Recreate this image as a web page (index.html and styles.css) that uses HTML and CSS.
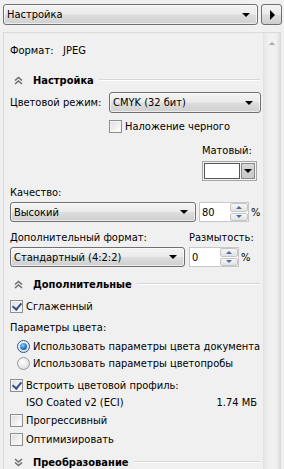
FILE: index.html
```html
<!DOCTYPE html>
<html lang="ru">
<head>
<meta charset="utf-8">
<title>Настройка</title>
<link rel="stylesheet" href="styles.css">
</head>
<body>
<div class="topbar">
  <div class="combo combo-top"><span class="combo-text">Настройка</span><span class="arrow"></span></div>
  <div class="play-btn"><span class="play"></span></div>
</div>
<div class="panel">
  <div class="content">
    <div class="row row-format"><span class="fmt-label">Формат:</span><span class="fmt-value">JPEG</span></div>

    <div class="section sec-1">
      <svg class="chev" width="9" height="9" viewBox="0 0 9 9"><path d="M1 4.5 L4.5 1.5 L8 4.5 M1 8 L4.5 5 L8 8" fill="none" stroke="#6d6d6d" stroke-width="1.6"/></svg>
      <span class="sec-title">Настройка</span><span class="sec-line"></span>
    </div>

    <div class="row row-mode">
      <span class="mode-label">Цветовой режим:</span>
      <div class="combo combo-mode"><span class="combo-text">CMYK (32 бит)</span><span class="arrow"></span></div>
    </div>

    <label class="row check-row row-overprint"><span class="cb"></span>Наложение черного</label>

    <div class="matte">
      <div class="matte-label">Матовый:</div>
      <div class="swatch-btn"><span class="swatch"></span><span class="swatch-drop"><span class="arrow"></span></span></div>
    </div>

    <div class="row row-quality-label">Качество:</div>
    <div class="row row-quality">
      <div class="combo combo-quality"><span class="combo-text">Высокий</span><span class="arrow"></span></div>
      <div class="spin"><span class="spin-val">80</span><span class="spin-btns"><span class="spin-up"></span><span class="spin-down"></span></span></div>
      <span class="pct">%</span>
    </div>

    <div class="row row-sub-labels"><span class="sub-label">Дополнительный формат:</span><span class="blur-label">Размытость:</span></div>
    <div class="row row-sub">
      <div class="combo combo-sub"><span class="combo-text">Стандартный (4:2:2)</span><span class="arrow"></span></div>
      <div class="spin"><span class="spin-val">0</span><span class="spin-btns"><span class="spin-up"></span><span class="spin-down"></span></span></div>
      <span class="pct">%</span>
    </div>

    <div class="section sec-2">
      <svg class="chev" width="9" height="9" viewBox="0 0 9 9"><path d="M1 4.5 L4.5 1.5 L8 4.5 M1 8 L4.5 5 L8 8" fill="none" stroke="#6d6d6d" stroke-width="1.6"/></svg>
      <span class="sec-title">Дополнительные</span><span class="sec-line"></span>
    </div>

    <label class="row check-row row-smooth"><span class="cb checked"></span>Сглаженный</label>
    <div class="row row-color-params">Параметры цвета:</div>
    <label class="row radio-row row-r1"><span class="rb on"></span>Использовать параметры цвета документа</label>
    <label class="row radio-row row-r2"><span class="rb"></span>Использовать параметры цветопробы</label>
    <label class="row check-row row-embed"><span class="cb checked"></span>Встроить цветовой профиль:</label>
    <div class="row row-profile"><span>ISO Coated v2 (ECI)</span><span class="size">1.74 МБ</span></div>
    <label class="row check-row row-prog"><span class="cb"></span>Прогрессивный</label>
    <label class="row check-row row-opt"><span class="cb"></span>Оптимизировать</label>

    <div class="section sec-3">
      <svg class="chev" width="9" height="9" viewBox="0 0 9 9"><path d="M1 1 L4.5 4 L8 1 M1 4.5 L4.5 7.5 L8 4.5" fill="none" stroke="#6d6d6d" stroke-width="1.6"/></svg>
      <span class="sec-title">Преобразование</span><span class="sec-line"></span>
    </div>
  </div>
  <div class="scrollbar"><span class="scroll-up"></span></div>
</div>
</body>
</html>
```

FILE: styles.css
```css
* { box-sizing: border-box; }
html, body { margin: 0; padding: 0; }
body {
  background: #f0f0f0;
  font-family: "DejaVu Sans Condensed", "DejaVu Sans", sans-serif;
  font-size: 11px;
  color: #000;
  width: 284px;
  height: 469px;
  overflow: hidden;
}

.topbar {
  display: flex;
  gap: 3px;
  padding: 4px 0 0 3px;
  height: 32px;
}
.combo {
  display: flex;
  align-items: center;
  height: 21px;
  border: 1px solid #707070;
  border-radius: 3px;
  background: linear-gradient(#f3f3f3 0%, #ebebeb 48%, #dddddd 52%, #cfcfcf 100%);
  box-shadow: inset 0 0 0 1px rgba(255,255,255,0.6);
  padding: 0 7px 0 3px;
}
.combo-text { flex: 1; white-space: nowrap; }
.arrow {
  width: 0; height: 0;
  border-left: 4px solid transparent;
  border-right: 4px solid transparent;
  border-top: 4px solid #000;
}
.combo-top { width: 255px; }
.play-btn {
  width: 21px;
  height: 21px;
  border: 1px solid #707070;
  border-radius: 3px;
  background: linear-gradient(#f3f3f3 0%, #ebebeb 48%, #dddddd 52%, #cfcfcf 100%);
  display: flex;
  align-items: center;
  justify-content: center;
}
.play {
  width: 0; height: 0;
  border-top: 5px solid transparent;
  border-bottom: 5px solid transparent;
  border-left: 5px solid #000;
  margin-left: 1px;
}

.panel {
  margin-left: 3px;
  width: 278px;
  height: 460px;
  border: 1px solid #d9d9d9;
  border-bottom: none;
  display: flex;
}
.content {
  flex: 1;
  padding: 0 2px 0 6px;
}
.scrollbar {
  width: 17px;
  border-left: 1px solid #e2e2e2;
  background: linear-gradient(90deg, #e6e6e6 0, #ececec 2px, #f0f0f0 5px, #f0f0f0 12px, #e8e8e8 14px, #dedede 16px);
  position: relative;
}
.scroll-up {
  position: absolute;
  left: 5px;
  top: 9px;
  width: 0; height: 0;
  border-left: 3px solid transparent;
  border-right: 3px solid transparent;
  border-bottom: 3px solid #a8a8a8;
}

.row { display: flex; align-items: center; height: 16px; white-space: nowrap; }

.row-format { margin-top: 9px; height: 17px; }
.fmt-label { width: 53px; }

.section { display: flex; align-items: center; height: 18px; }
.chev { margin-left: 4px; margin-right: 10px; }
.sec-title { font-weight: bold; }
.sec-line {
  flex: 1;
  height: 2px;
  margin-left: 5px;
  margin-right: 1px;
  border-top: 1px solid #d5d5d5;
  border-bottom: 1px solid #ffffff;
}
.sec-1 { margin-top: 12px; }
.sec-2 { margin-top: 8px; }
.sec-3 { margin-top: 6px; }

.row-mode { margin-top: 3px; height: 21px; }
.mode-label { width: 99px; }
.combo-mode { width: 152px; }

.cb {
  width: 13px;
  height: 13px;
  border: 1px solid #8e8f8f;
  background: linear-gradient(135deg, #dcdcdc 0%, #f2f2f2 60%, #ffffff 100%);
  box-shadow: inset 0 0 0 1px #f4f4f4;
  margin-right: 3px;
  flex: none;
  position: relative;
}
.cb.checked::after {
  content: "";
  position: absolute;
  left: 3px;
  top: 0px;
  width: 4px;
  height: 7px;
  border-right: 2px solid #3b4f8c;
  border-bottom: 2px solid #3b4f8c;
  transform: rotate(40deg);
}
.row-overprint { margin-top: 5px; padding-left: 99px; }

.matte {
  width: 55px;
  margin-left: auto;
  margin-right: 4px;
  margin-top: 9px;
}
.matte-label { height: 16px; line-height: 16px; }
.swatch-btn {
  margin-top: 2px;
  height: 20px;
  border: 1px solid #a5a5a5;
  display: flex;
  padding: 1px;
  gap: 1px;
  background: #f4f4f4;
}
.swatch {
  flex: 1;
  background: #fff;
  border: 1px solid #555;
}
.swatch-drop {
  width: 14px;
  background: linear-gradient(#d8d8d8, #c8c8c8);
  border: 1px solid #8a8a8a;
  display: flex;
  align-items: center;
  justify-content: center;
}

.row-quality-label { margin-top: 3px; }
.row-quality { margin-top: 2px; height: 20px; }
.combo-quality { width: 186px; height: 20px; }
.spin {
  width: 50px;
  height: 20px;
  border: 1px solid #c8c8c8;
  background: #fff;
  margin-left: 3px;
  display: flex;
  align-items: center;
  padding-left: 2px;
}
.spin-val { flex: 1; }
.spin-btns {
  width: 18px;
  height: 18px;
  display: flex;
  flex-direction: column;
  gap: 1px;
  margin-right: 0;
}
.spin-up, .spin-down {
  flex: 1;
  border: 1px solid #c6c6c6;
  border-radius: 2px;
  background: linear-gradient(#f6f6f6, #e2e2e2);
  display: flex;
  align-items: center;
  justify-content: center;
}
.spin-up::after {
  content: "";
  border-left: 3px solid transparent;
  border-right: 3px solid transparent;
  border-bottom: 3px solid #4d6aa6;
}
.spin-down::after {
  content: "";
  border-left: 3px solid transparent;
  border-right: 3px solid transparent;
  border-top: 3px solid #4d6aa6;
}
.pct { margin-left: 2px; }

.row-sub-labels { margin-top: 7px; }
.sub-label { width: 179px; }
.row-sub { margin-top: 2px; height: 20px; }
.combo-sub { width: 175px; height: 20px; }
.row-sub .spin { margin-left: 4px; }

.row-smooth { margin-top: 5px; }
.row-color-params { margin-top: 5px; }

.rb {
  width: 13px;
  height: 13px;
  border-radius: 50%;
  border: 1px solid #9a9a9a;
  background: radial-gradient(circle at 40% 35%, #ffffff 0%, #e6e6e6 60%, #cfcfcf 100%);
  margin-left: 7px;
  margin-right: 3px;
  flex: none;
  position: relative;
}
.rb.on {
  border-color: #2b5a8e;
}
.rb.on::after {
  content: "";
  position: absolute;
  left: 2px; top: 2px;
  width: 7px; height: 7px;
  border-radius: 50%;
  background: radial-gradient(circle at 40% 35%, #8fd1ff 0%, #2a7fd0 50%, #0e3f7c 100%);
}
.row-r1 { margin-top: 3px; }
.row-r2 { margin-top: 1px; }

.row-embed { margin-top: 6px; }
.row-profile { margin-top: 1px; padding-left: 16px; padding-right: 4px; justify-content: space-between; }
.row-prog { margin-top: 2px; }
.row-opt { margin-top: 3px; }
```
